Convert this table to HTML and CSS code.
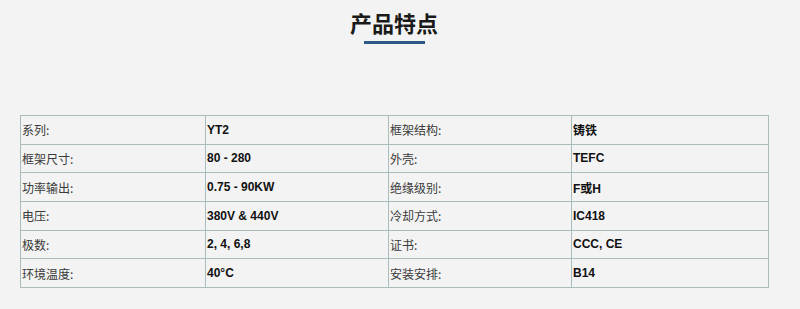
FILE: index.html
```html
<!DOCTYPE html>
<html lang="zh-CN">
<head>
<meta charset="utf-8">
<title>产品特点</title>
<link rel="stylesheet" href="styles.css">
</head>
<body>
<div class="wrap">
  <h2 class="title">产品特点</h2>
  <div class="bar"></div>
  <table class="spec">
    <colgroup>
      <col class="c1"><col class="c2"><col class="c3"><col class="c4">
    </colgroup>
    <tr><td class="k">系列:</td><td class="v">YT2</td><td class="k">框架结构:</td><td class="v">铸铁</td></tr>
    <tr><td class="k">框架尺寸:</td><td class="v">80 - 280</td><td class="k">外壳:</td><td class="v">TEFC</td></tr>
    <tr><td class="k">功率输出:</td><td class="v">0.75 - 90KW</td><td class="k">绝缘级别:</td><td class="v">F或H</td></tr>
    <tr><td class="k">电压:</td><td class="v">380V &amp; 440V</td><td class="k">冷却方式:</td><td class="v">IC418</td></tr>
    <tr><td class="k">极数:</td><td class="v">2, 4, 6,8</td><td class="k">证书:</td><td class="v">CCC, CE</td></tr>
    <tr><td class="k">环境温度:</td><td class="v">40°C</td><td class="k">安装安排:</td><td class="v">B14</td></tr>
  </table>
</div>
</body>
</html>
```

FILE: styles.css
```css
html, body {
  margin: 0;
  padding: 0;
  background: #f3f3f3;
}
body {
  font-family: "Liberation Sans", "Noto Sans CJK SC", sans-serif;
  color: #333;
}
.wrap {
  width: 748px;
  padding: 7px 21px 0 20px;
}
.title {
  margin: 0;
  font-family: "Noto Sans CJK SC", sans-serif;
  font-size: 22px;
  font-weight: 700;
  line-height: 30px;
  text-align: center;
  color: #1a1a1a;
}
.bar {
  width: 61px;
  height: 3px;
  margin: 4px auto 0;
  background: #2c5a88;
}
.spec {
  margin-top: 71px;
  width: 748px;
  height: 173px;
  border-collapse: collapse;
  table-layout: fixed;
  font-size: 12px;
}
.c1 { width: 185px; }
.c2 { width: 183px; }
.c3 { width: 183px; }
.c4 { width: 197px; }
.spec td {
  border: 1px solid #a9bdbd;
  padding: 0 1px;
  vertical-align: middle;
}
.k {
  color: #3a3a3a;
  font-family: "Noto Sans CJK SC", sans-serif;
}
.v {
  color: #111;
  font-weight: 700;
}
```
